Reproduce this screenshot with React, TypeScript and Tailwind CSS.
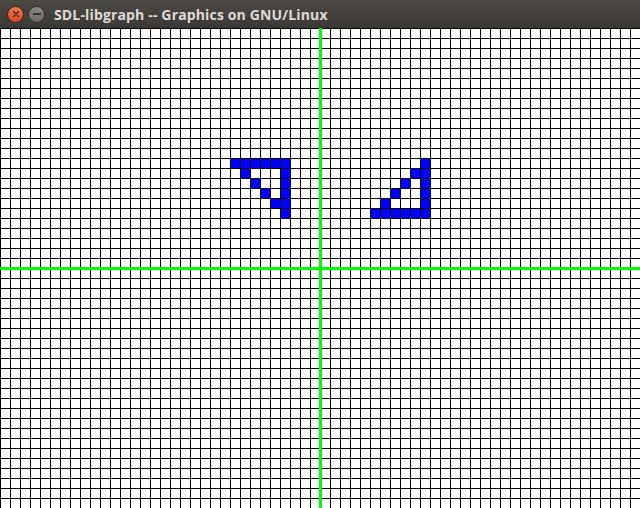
import React from "react";

const COLS = 64;
const ROWS = 48;
const CELL = 10;

// filled cells [col, row]
const cells: [number, number][] = [
  // left triangle
  [23, 13], [24, 13], [25, 13], [26, 13], [27, 13], [28, 13],
  [24, 14], [28, 14],
  [25, 15], [28, 15],
  [26, 16], [28, 16],
  [27, 17], [28, 17],
  [28, 18],
  // right triangle
  [42, 13],
  [41, 14], [42, 14],
  [40, 15], [42, 15],
  [39, 16], [42, 16],
  [38, 17], [42, 17],
  [37, 18], [38, 18], [39, 18], [40, 18], [41, 18], [42, 18],
];

function TitleBar() {
  return (
    <div className="flex h-[28px] items-center bg-gradient-to-b from-[#4a4944] to-[#3b3a36] pl-[7px]">
      <div className="flex items-center gap-[4px]">
        <div className="flex h-[17px] w-[17px] items-center justify-center rounded-full border border-[#3a2419] bg-gradient-to-b from-[#f37a4e] to-[#d9461c]">
          <svg width="8" height="8" viewBox="0 0 8 8">
            <path d="M1.5 1.5 L6.5 6.5 M6.5 1.5 L1.5 6.5" stroke="#3b2418" strokeWidth="1.4" strokeLinecap="round" />
          </svg>
        </div>
        <div className="flex h-[17px] w-[17px] items-center justify-center rounded-full border border-[#2e2d2a] bg-gradient-to-b from-[#8c8b86] to-[#6a6964]">
          <div className="h-[1.5px] w-[8px] bg-[#36352f]" />
        </div>
      </div>
      <span className="ml-[9px] font-['Open_Sans','DejaVu_Sans',sans-serif] text-[14px] font-bold tracking-[0.15px] text-[#dfdbd2]">
        SDL-libgraph -- Graphics on GNU/Linux
      </span>
    </div>
  );
}

function Grid() {
  const w = COLS * CELL;
  const h = ROWS * CELL;
  return (
    <svg width={w} height={h} viewBox={`0 0 ${w} ${h}`} className="block" shapeRendering="crispEdges">
      <rect x="0" y="0" width={w} height={h} fill="#ffffff" />
      {cells.map(([c, r]) => (
        <rect key={`${c}-${r}`} x={c * CELL} y={r * CELL} width={CELL} height={CELL} fill="#0000ff" />
      ))}
      {Array.from({ length: COLS }, (_, i) => (
        <rect key={`v${i}`} x={i * CELL} y={0} width={1} height={h} fill="#000000" />
      ))}
      {Array.from({ length: ROWS }, (_, i) => (
        <rect key={`h${i}`} x={0} y={i * CELL} width={w} height={1} fill="#000000" />
      ))}
      <rect x={319} y={0} width={3} height={h} fill="#00ff00" />
      <rect x={0} y={239} width={w} height={3} fill="#00ff00" />
    </svg>
  );
}

export default function App() {
  return (
    <div className="h-[508px] w-[640px] overflow-hidden bg-[#3b3a36]">
      <TitleBar />
      <Grid />
    </div>
  );
}
